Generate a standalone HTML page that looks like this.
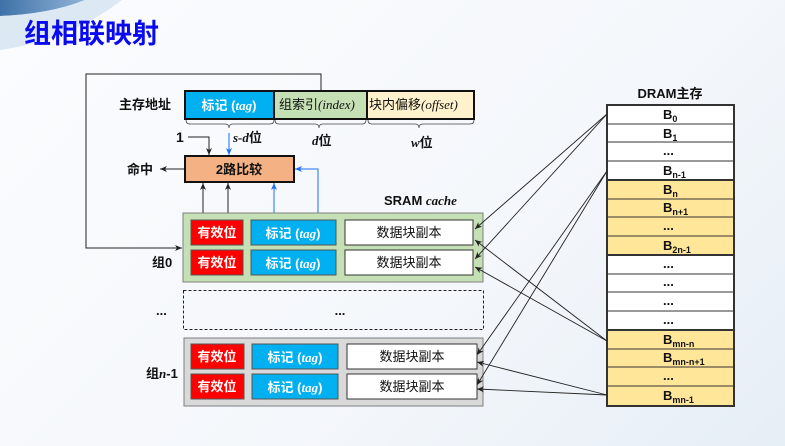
<!DOCTYPE html>
<html><head><meta charset="utf-8"><style>
html,body{margin:0;padding:0}
body{width:785px;height:446px;overflow:hidden;background:linear-gradient(135deg,#fbfcfe 0%,#f4f7fb 60%,#e6eef6 100%);font-family:"Liberation Sans","Noto Sans CJK SC",sans-serif}
svg{position:absolute;left:0;top:0}
text{font-family:"Liberation Sans","Noto Sans CJK SC",sans-serif}
.b{font-weight:bold}
.i{font-family:"Liberation Serif","Noto Serif CJK SC",serif;font-style:italic}
</style></head><body>
<svg width="785" height="446" viewBox="0 0 785 446">
<defs>
<linearGradient id="arc" x1="0" y1="0" x2="1" y2="0"><stop offset="0" stop-color="#3f72a8"/><stop offset="1" stop-color="#8fb3d6"/></linearGradient>
<marker id="ah" markerWidth="8" markerHeight="8" refX="7" refY="4" orient="auto" markerUnits="userSpaceOnUse"><path d="M0,1 L7,4 L0,7 L2,4 z" fill="#222"/></marker>
<marker id="ab" markerWidth="8" markerHeight="8" refX="7" refY="4" orient="auto" markerUnits="userSpaceOnUse"><path d="M0,1 L7,4 L0,7 L2,4 z" fill="#1a6ef5"/></marker>
</defs>
<path d="M0,0 L85,0 Q50,14 0,16 Z" fill="url(#arc)"/>
<path d="M0,16 Q50,14 85,0 L122,0 Q70,40 0,50 Z" fill="#d5e3f0" opacity="0.8"/>
<text x="24" y="43" font-size="27" font-weight="bold" fill="#0a0af0">组相联映射</text>

<polyline points="321,91 321,74 86,74 86,248 182,248" fill="none" stroke="#222" stroke-width="1" marker-end="url(#ah)"/>

<text x="119" y="109" font-size="13" class="b" fill="#111">主存地址</text>
<rect x="185" y="91" width="89" height="28" fill="#00b0f0" stroke="#111" stroke-width="2"/>
<rect x="274" y="91" width="93" height="28" fill="#c5e0b4" stroke="#111" stroke-width="2"/>
<rect x="367" y="91" width="107" height="28" fill="#fff2cc" stroke="#111" stroke-width="2"/>
<text x="229" y="110" font-size="13" fill="#fff" text-anchor="middle" class="b">标记 (<tspan class="i">tag</tspan>)</text>
<text x="279" y="109" font-size="13" fill="#111">组索引<tspan class="i">(index)</tspan></text>
<text x="369" y="109" font-size="13" fill="#111">块内偏移<tspan class="i">(offset)</tspan></text>
<path d="M186,120 q0,4 4,4 h35 q4,0 4,4 q0,-4 4,-4 h37 q4,0 4,-4" fill="none" stroke="#444" stroke-width="0.8"/>
<path d="M275,120 q0,4 4,4 h36 q4,0 4,4 q0,-4 4,-4 h39 q4,0 4,-4" fill="none" stroke="#444" stroke-width="0.8"/>
<path d="M368,120 q0,4 4,4 h43 q4,0 4,4 q0,-4 4,-4 h47 q4,0 4,-4" fill="none" stroke="#444" stroke-width="0.8"/>
<text x="233" y="142" font-size="13" class="b" fill="#111"><tspan class="i">s-d</tspan>位</text>
<text x="312" y="145" font-size="13" class="b" fill="#111"><tspan class="i">d</tspan>位</text>
<text x="411" y="147" font-size="13" class="b" fill="#111"><tspan class="i">w</tspan>位</text>

<text x="176" y="142" font-size="14" class="b" fill="#111">1</text>
<polyline points="188,137 209,137 209,155" fill="none" stroke="#222" marker-end="url(#ah)"/>
<line x1="229" y1="133" x2="229" y2="155" stroke="#1a6ef5" marker-end="url(#ab)"/>

<rect x="185" y="156" width="109" height="26" fill="#f4b183" stroke="#111" stroke-width="2"/>
<text x="239" y="174" font-size="13" class="b" fill="#111" text-anchor="middle">2路比较</text>
<text x="127" y="174" font-size="13" class="b" fill="#111">命中</text>
<line x1="184" y1="169" x2="160" y2="169" stroke="#222" marker-end="url(#ah)"/>

<line x1="203" y1="221" x2="203" y2="183" stroke="#222" marker-end="url(#ah)"/>
<line x1="228" y1="221" x2="228" y2="183" stroke="#222" marker-end="url(#ah)"/>
<line x1="274" y1="221" x2="274" y2="183" stroke="#1a6ef5" marker-end="url(#ab)"/>
<polyline points="318,221 318,169 295,169" fill="none" stroke="#1a6ef5" marker-end="url(#ab)"/>
<line x1="203" y1="245" x2="203" y2="250" stroke="#222"/>
<line x1="274" y1="245" x2="274" y2="250" stroke="#1a6ef5"/>

<text x="384" y="205" font-size="13" class="b" fill="#111">SRAM <tspan class="i">cache</tspan></text>

<rect x="183" y="213" width="300" height="69" fill="#c5e0b4" stroke="#7f7f7f"/>
<g font-size="13" class="b">
<rect x="191" y="220" width="52" height="25" fill="#f00" stroke="#555"/><text x="217" y="237" fill="#fff" text-anchor="middle">有效位</text>
<rect x="251" y="220" width="85" height="25" fill="#00b0f0" stroke="#555"/><text x="293" y="238" fill="#fff" text-anchor="middle">标记 (<tspan class="i">tag</tspan>)</text>
<rect x="345" y="220" width="128" height="25" fill="#fff" stroke="#333"/><text x="409" y="237" fill="#111" text-anchor="middle" font-weight="normal">数据块副本</text>
<rect x="191" y="250" width="52" height="25" fill="#f00" stroke="#555"/><text x="217" y="267" fill="#fff" text-anchor="middle">有效位</text>
<rect x="251" y="250" width="85" height="25" fill="#00b0f0" stroke="#555"/><text x="293" y="268" fill="#fff" text-anchor="middle">标记 (<tspan class="i">tag</tspan>)</text>
<rect x="345" y="250" width="128" height="25" fill="#fff" stroke="#333"/><text x="409" y="267" fill="#111" text-anchor="middle" font-weight="normal">数据块副本</text>
</g>
<text x="152" y="267" font-size="13" class="b" fill="#111">组0</text>

<rect x="183.5" y="290.5" width="300" height="39" fill="none" stroke="#222" stroke-dasharray="3,2"/>
<text x="340" y="315" font-size="13" class="b" fill="#111" text-anchor="middle">...</text>
<text x="156" y="315" font-size="13" class="b" fill="#111">...</text>

<rect x="184" y="338" width="299" height="68" fill="#d9d9d9" stroke="#7f7f7f"/>
<g font-size="13" class="b">
<rect x="191" y="344" width="53" height="25" fill="#f00" stroke="#555"/><text x="217" y="361" fill="#fff" text-anchor="middle">有效位</text>
<rect x="252" y="344" width="86" height="25" fill="#00b0f0" stroke="#555"/><text x="295" y="362" fill="#fff" text-anchor="middle">标记 (<tspan class="i">tag</tspan>)</text>
<rect x="347" y="344" width="130" height="25" fill="#fff" stroke="#333"/><text x="412" y="361" fill="#111" text-anchor="middle" font-weight="normal">数据块副本</text>
<rect x="191" y="374" width="53" height="25" fill="#f00" stroke="#555"/><text x="217" y="391" fill="#fff" text-anchor="middle">有效位</text>
<rect x="252" y="374" width="86" height="25" fill="#00b0f0" stroke="#555"/><text x="295" y="392" fill="#fff" text-anchor="middle">标记 (<tspan class="i">tag</tspan>)</text>
<rect x="347" y="374" width="130" height="25" fill="#fff" stroke="#333"/><text x="412" y="391" fill="#111" text-anchor="middle" font-weight="normal">数据块副本</text>
</g>
<text x="146" y="378" font-size="13" class="b" fill="#111">组<tspan class="i">n</tspan>-1</text>

<text x="670" y="98" font-size="13" class="b" fill="#111" text-anchor="middle">DRAM主存</text>
<g stroke="#333" stroke-width="1">
<rect x="607" y="105" width="127" height="75" fill="#fff"/>
<rect x="607" y="180" width="127" height="75" fill="#ffe699"/>
<rect x="607" y="255" width="127" height="75" fill="#fff"/>
<rect x="607" y="330" width="127" height="76" fill="#ffe699"/>
<path d="M607,124H734M607,142H734M607,161H734M607,199H734M607,217H734M607,236H734M607,274H734M607,292H734M607,311H734M607,349H734M607,367H734M607,386H734"/>
</g>
<rect x="607" y="105" width="127" height="301" fill="none" stroke="#333" stroke-width="2"/>
<path d="M607,180H734M607,255H734M607,330H734" stroke="#333" stroke-width="2"/>
<g font-size="13" class="b" fill="#111">
<text x="663" y="119">B<tspan font-size="9" dy="3">0</tspan></text>
<text x="663" y="138">B<tspan font-size="9" dy="3">1</tspan></text>
<text x="663" y="155">...</text>
<text x="663" y="175">B<tspan font-size="9" dy="3">n-1</tspan></text>
<text x="663" y="194">B<tspan font-size="9" dy="3">n</tspan></text>
<text x="663" y="212">B<tspan font-size="9" dy="3">n+1</tspan></text>
<text x="663" y="230">...</text>
<text x="663" y="250">B<tspan font-size="9" dy="3">2n-1</tspan></text>
<text x="663" y="268">...</text>
<text x="663" y="286">...</text>
<text x="663" y="305">...</text>
<text x="663" y="324">...</text>
<text x="663" y="344">B<tspan font-size="9" dy="3">mn-n</tspan></text>
<text x="663" y="362">B<tspan font-size="9" dy="3">mn-n+1</tspan></text>
<text x="663" y="380">...</text>
<text x="663" y="400">B<tspan font-size="9" dy="3">mn-1</tspan></text>
</g>

<g stroke="#222" stroke-width="0.9" fill="none">
<line x1="607" y1="114" x2="475" y2="229" marker-end="url(#ah)"/>
<line x1="607" y1="114" x2="475" y2="259" marker-end="url(#ah)"/>
<line x1="607" y1="171" x2="477" y2="355" marker-end="url(#ah)"/>
<line x1="607" y1="171" x2="477" y2="385" marker-end="url(#ah)"/>
<line x1="607" y1="341" x2="475" y2="240" marker-end="url(#ah)"/>
<line x1="607" y1="341" x2="475" y2="267" marker-end="url(#ah)"/>
<line x1="607" y1="395" x2="477" y2="362" marker-end="url(#ah)"/>
<line x1="607" y1="395" x2="477" y2="389" marker-end="url(#ah)"/>
</g>
</svg>
</body></html>
